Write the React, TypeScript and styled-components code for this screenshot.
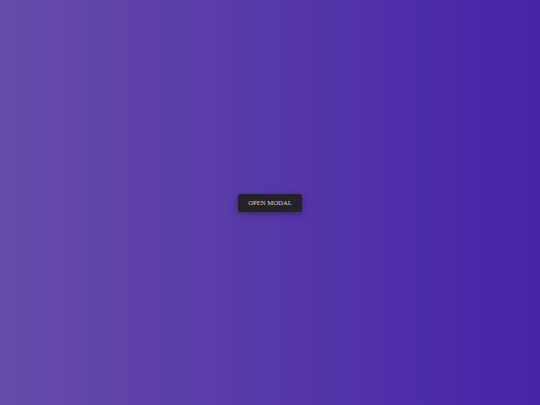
import styled, { createGlobalStyle } from "styled-components";

const GlobalStyle = createGlobalStyle`
  html, body {
    margin: 0;
    padding: 0;
    height: 100%;
  }
  #root {
    height: 100%;
  }
`;

const Page = styled.div`
  height: 100vh;
  display: flex;
  align-items: center;
  justify-content: center;
  background: linear-gradient(to right, #664ca9, #4524a8);
`;

const OpenButton = styled.button`
  height: 18px;
  padding: 0 10.5px;
  border: none;
  border-radius: 2px;
  background-color: #232327;
  color: #d8d8d8;
  font-family: "Liberation Serif", "Times New Roman", serif;
  font-size: 6.7px;
  text-transform: uppercase;
  box-shadow: 0 2px 6px rgba(0, 0, 0, 0.35);
  cursor: pointer;
`;

export default function App() {
  return (
    <>
      <GlobalStyle />
      <Page>
        <OpenButton>Open Modal</OpenButton>
      </Page>
    </>
  );
}
